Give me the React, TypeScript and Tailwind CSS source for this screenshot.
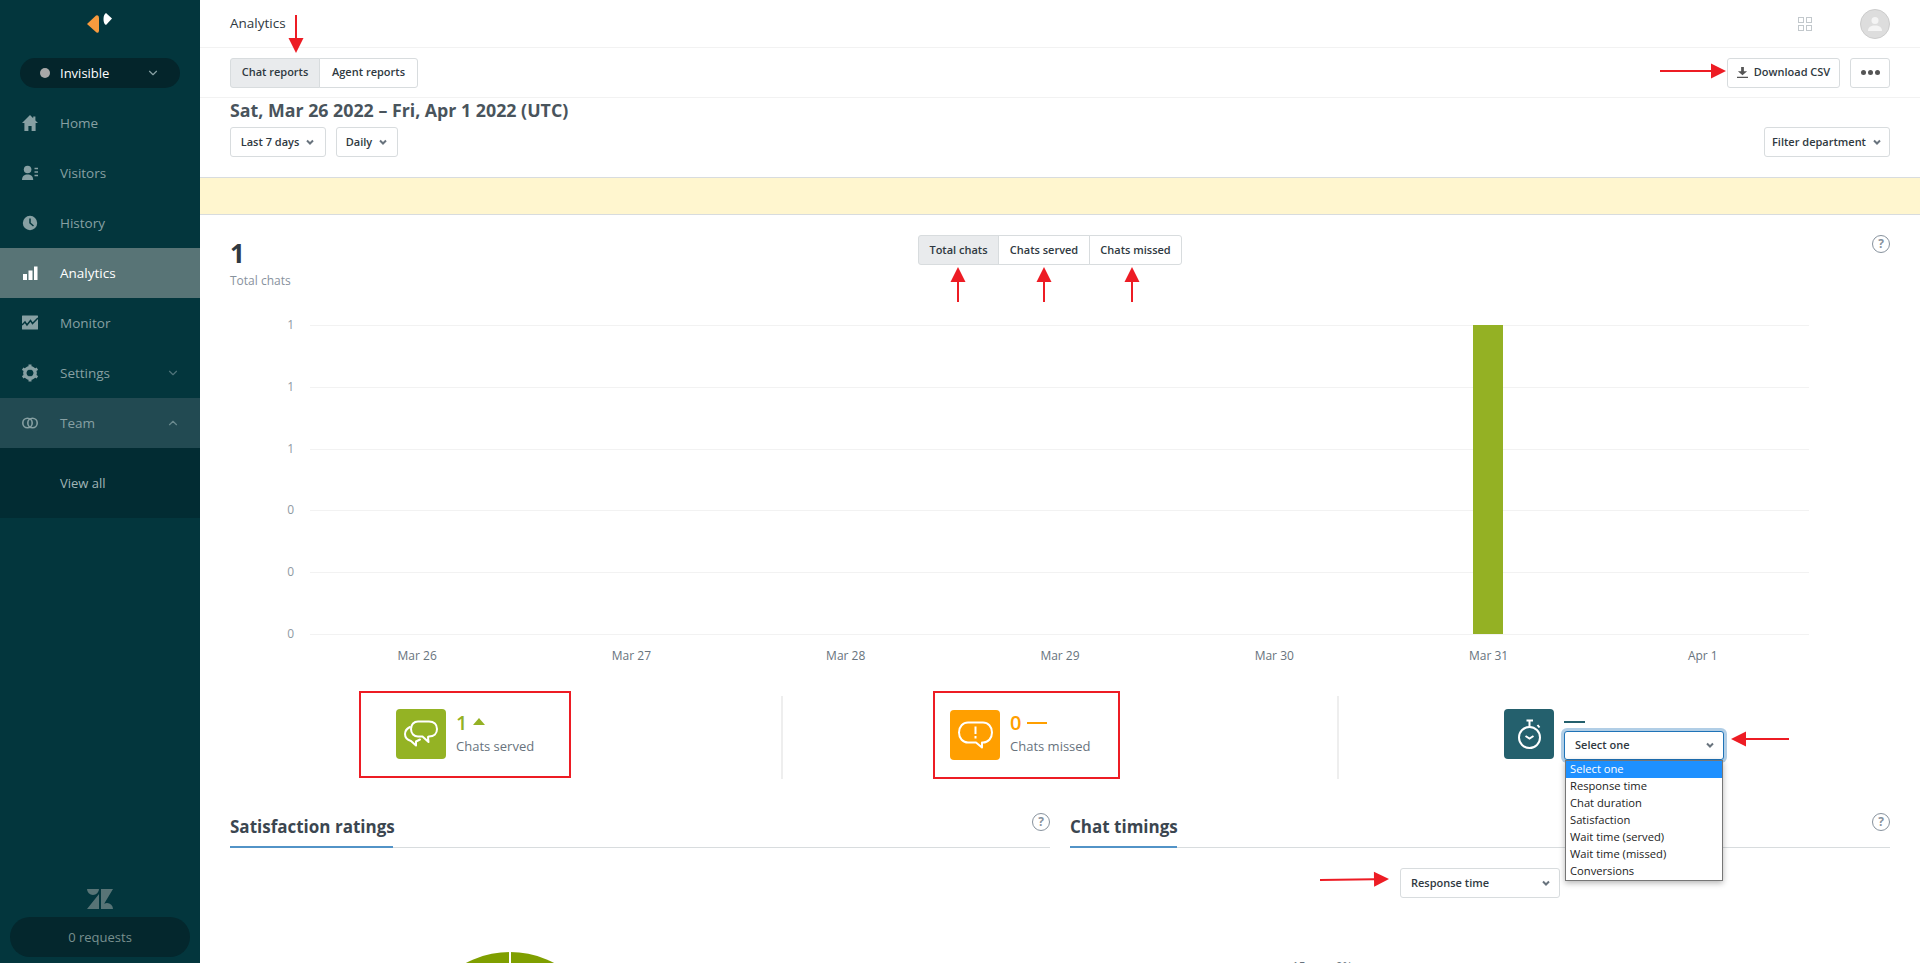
import { ChevronDown, ChevronUp } from 'lucide-react';

const chevron = 'M2 3.500l3 3 3-3';

function SmallChevron() {
  return (
    <svg viewBox="0 0 10 10" className="w-[10px] h-[10px] shrink-0 text-[#68737d]" fill="none" stroke="currentColor" strokeWidth="2">
      <path d={chevron} />
    </svg>
  );
}

function HelpIcon() {
  return (
    <div className="w-[18px] h-[18px] rounded-full border border-[#87929d] text-[#87929d] flex items-center justify-center text-[12px] font-bold leading-none">
      ?
    </div>
  );
}

function Btn({ children, className = '' }: { children: React.ReactNode; className?: string }) {
  return (
    <div className={`h-[30px] flex items-center justify-center gap-[6px] bg-white border border-[#d8dcde] rounded-[3px] text-[11px] font-semibold text-[#2f3941] whitespace-nowrap ${className}`}>
      {children}
    </div>
  );
}

// red annotation arrows that were painted on top of the screenshot
function Arrow({ x1, y1, x2, y2 }: { x1: number; y1: number; x2: number; y2: number }) {
  const a = Math.atan2(y2 - y1, x2 - x1);
  const bx = x2 - Math.cos(a) * 15;
  const by = y2 - Math.sin(a) * 15;
  const nx = -Math.sin(a) * 7.5;
  const ny = Math.cos(a) * 7.5;
  return (
    <>
      <line x1={x1} y1={y1} x2={bx} y2={by} stroke="#ed1c24" strokeWidth="2" />
      <polygon points={`${x2},${y2} ${bx + nx},${by + ny} ${bx - nx},${by - ny}`} fill="#ed1c24" />
    </>
  );
}

function Annotations() {
  return (
    <svg className="absolute inset-0 w-[1920px] h-[963px] pointer-events-none" viewBox="0 0 1920 963">
      <Arrow x1={296} y1={15} x2={296} y2={53} />
      <Arrow x1={1660} y1={71} x2={1726} y2={71} />
      <Arrow x1={958} y1={302} x2={958} y2={267} />
      <Arrow x1={1044} y1={302} x2={1044} y2={267} />
      <Arrow x1={1132} y1={302} x2={1132} y2={267} />
      <Arrow x1={1789} y1={739} x2={1731} y2={739} />
      <Arrow x1={1320} y1={880} x2={1389} y2={879} />
    </svg>
  );
}

const navIcons: Record<string, React.ReactNode> = {
  Home: <path d="M8 1 0 9h2.400v8h4v-5h3.200v5h4V9H16l-2.600-2.600V2.500h-2.200v1.700z" fill="currentColor" />,
  Visitors: (
    <>
      <circle cx="5.600" cy="5.500" r="3.800" fill="currentColor" />
      <path d="M0 16c0-3.600 2.400-5.400 5.600-5.400s5.600 1.800 5.600 5.400z" fill="currentColor" />
      <path d="M12.500 4.500H16M12.500 8H16M12.500 11.500H16" stroke="currentColor" strokeWidth="1.300" />
    </>
  ),
  History: (
    <>
      <circle cx="8" cy="9" r="7.200" fill="currentColor" />
      <path d="M8 4.500V9l3.500 3" stroke="#03363d" strokeWidth="1.500" fill="none" />
    </>
  ),
  Analytics: (
    <>
      <rect x="1" y="10" width="4" height="6" fill="currentColor" />
      <rect x="6.500" y="6.500" width="4" height="9.500" fill="currentColor" />
      <rect x="12" y="2.500" width="3.500" height="13.500" fill="currentColor" />
    </>
  ),
  Monitor: (
    <>
      <rect x="0" y="1.500" width="16" height="14" rx="0.500" fill="currentColor" />
      <path d="M0 11l3-3 2 3 3.500-4.500 2 3 5.500-5.500" stroke="#03363d" strokeWidth="1.500" fill="none" />
    </>
  ),
  Settings: (
    <>
      <circle cx="8" cy="9" r="5.200" fill="none" stroke="currentColor" strokeWidth="3.400" />
      <path d="M8 0.500V17.500M0.600 4.700 15.400 13.300M0.600 13.300 15.400 4.700" stroke="currentColor" strokeWidth="3" />
      <circle cx="8" cy="9" r="3.300" fill="#03363d" />
    </>
  ),
  Team: (
    <>
      <circle cx="5.500" cy="9" r="4.700" fill="none" stroke="currentColor" strokeWidth="1.600" />
      <circle cx="10.500" cy="9" r="4.700" fill="none" stroke="currentColor" strokeWidth="1.600" />
    </>
  ),
};

function NavItem({ label, active, open, chevron }: { label: string; active?: boolean; open?: boolean; chevron?: 'up' | 'down' }) {
  return (
    <div className={`h-[50px] flex items-center pl-[22px] pr-[20px] ${active ? 'bg-[#587476] text-white' : open ? 'bg-[#224a52] text-[#87a0a3]' : 'text-[#87a0a3]'}`}>
      <svg viewBox="0 0 16 18" className={`w-[16px] h-[18px] shrink-0 ${active ? 'text-white' : 'text-[#87a0a3]'}`}>
        {navIcons[label]}
      </svg>
      <span className={`ml-[22px] pt-[1px] text-[13.500px] leading-none ${active ? 'text-white' : ''}`}>{label}</span>
      {chevron === 'down' && <ChevronDown className="ml-auto w-[14px] h-[14px] text-[#4f7379]" />}
      {chevron === 'up' && <ChevronUp className="ml-auto w-[14px] h-[14px] text-[#6b8a8e]" />}
    </div>
  );
}

function Sidebar() {
  return (
    <aside className="w-[200px] h-full shrink-0 bg-[#03363d] flex flex-col">
      <div className="h-[58px] flex justify-center pt-[12px]">
        <svg viewBox="88 12 26 22" className="w-[26px] h-[22px]">
          <path d="M88 24 97 15.500Q100 14.500 100 18L100 30.500Q100 33.500 97.500 32.500z" fill="#f79a3e" />
          <path d="M107 13 113 18.500 107 25Q104.500 24 104.500 19Q104.500 14.500 107 13z" fill="#fff" />
        </svg>
      </div>
      <div className="mx-[20px] h-[30px] rounded-full bg-[#04252b] flex items-center pl-[20px] pr-[20px] text-[13px] text-white">
        <span className="w-[10px] h-[10px] rounded-full bg-[#a8a8a8]" />
        <span className="ml-[10px] pt-[1px]">Invisible</span>
        <ChevronDown className="ml-auto w-[14px] h-[14px] text-[#87a0a3]" />
      </div>
      <nav className="mt-[10px]">
        <NavItem label="Home" />
        <NavItem label="Visitors" />
        <NavItem label="History" />
        <NavItem label="Analytics" active />
        <NavItem label="Monitor" />
        <NavItem label="Settings" chevron="down" />
        <NavItem label="Team" open chevron="up" />
      </nav>
      <div className="h-[70px] bg-[#022c33] flex items-center pl-[60px] pt-[2px] text-[13px] text-[#a0b5b7]">View all</div>
      <div className="mt-auto flex flex-col items-center pb-[6px]">
        <svg viewBox="0 0 26 20" className="w-[26px] h-[20px] text-[#587476]">
          <path d="M0 0h12a6 6 0 0 1-12 0zM14 0h12L14 20V0zM12 20H0L12 5zM14 20a6 6 0 0 1 12 0z" fill="currentColor" />
        </svg>
        <div className="mt-[8px] w-[180px] h-[40px] rounded-full bg-[#04272d] flex items-center justify-center pt-[1px] text-[13px] text-[#78908f]">0 requests</div>
      </div>
    </aside>
  );
}

function Chart() {
  const rows = ['1', '1', '1', '0', '0', '0'];
  const days = ['Mar 26', 'Mar 27', 'Mar 28', 'Mar 29', 'Mar 30', 'Mar 31', 'Apr 1'];
  return (
    <div className="mt-[60px] ml-[30px] shrink-0">
      <div className="relative">
        {rows.map((r, i) => (
          <div key={i} className={`flex items-start ${i === rows.length - 1 ? 'h-[1px]' : 'h-[61.8px]'}`}>
            <span className="w-[64px] text-right text-[12px] leading-none -mt-[6px] text-[#8f9aa3]">{r}</span>
            <div className="ml-[16px] w-[1499px] h-[1px] bg-[#f2f2f2]" />
          </div>
        ))}
        <div className="absolute left-[1243px] top-0 w-[30px] h-[309px] bg-[#94b124]" />
      </div>
      <div className="ml-[80px] w-[1500px] flex mt-[13px]">
        {days.map((d) => (
          <div key={d} className="flex-1 text-center text-[12px] leading-[16px] text-[#68737d]">{d}</div>
        ))}
      </div>
    </div>
  );
}

function ServedIcon() {
  return (
    <svg viewBox="0 0 50 50" className="w-[50px] h-[50px]" fill="none" stroke="#fff" strokeWidth="2" strokeLinejoin="round" strokeLinecap="round">
      <path d="M22 12.500h11c5 0 8 3 8 7.500s-3 7.500-8 7.500l-1 .500.500 5-6-5.500h-4.500c-4 0-7-3-7-7.500s3-7.500 7-7.500z" />
      <path d="M14 18c-3 1.500-5 4-5 7 0 3.500 2.500 6 6 7l5 4.500v-4l4-2" />
    </svg>
  );
}

function MissedIcon() {
  return (
    <svg viewBox="0 0 50 50" className="w-[50px] h-[50px]" fill="none" stroke="#fff" strokeWidth="2" strokeLinejoin="round">
      <path d="M18 12.500h15c5 0 9 4 9 10s-4 10-9 10h-1v5l-6-5h-8c-5 0-9-4-9-10s4-10 9-10z" />
      <path d="M25.500 16.500v7.500M25.500 26v2.500" />
    </svg>
  );
}

function TimerIcon() {
  return (
    <svg viewBox="0 0 50 50" className="w-[50px] h-[50px]" fill="none" stroke="#fff" strokeWidth="2">
      <circle cx="25.500" cy="28.500" r="10.500" />
      <path d="M22.500 11.500h6.500M25.500 11.500V18M33.500 16l2 2.500" />
      <path d="M21.500 27l4 2.500 4-2.500" />
    </svg>
  );
}

function Stats() {
  return (
    <div className="mt-[27px] ml-[30px] mr-[30px] flex h-[87px] shrink-0">
      <div className="w-[553px] shrink-0 border-r-2 border-[#eeeeee] my-[5px] -mb-[1px] relative">
        <div className="absolute left-[129px] -top-[5px] w-[212px] h-[87px] border-2 border-[#ed1c24] flex items-center pl-[35px]">
          <div className="w-[50px] h-[50px] rounded-[4px] bg-[#94b324]"><ServedIcon /></div>
          <div className="ml-[10px] -mt-[3px]">
            <div className="flex items-center gap-[6px] text-[20px] leading-[24px] font-semibold text-[#94b124]">
              1
              <span className="w-0 h-0 border-l-[6px] border-r-[6px] border-b-[7px] border-l-transparent border-r-transparent border-b-[#94b124] mb-[2px]" />
            </div>
            <div className="mt-[2px] text-[13px] leading-[18px] text-[#68737d]">Chats served</div>
          </div>
        </div>
      </div>
      <div className="w-[556px] shrink-0 border-r-2 border-[#eeeeee] my-[5px] -mb-[1px] relative">
        <div className="absolute left-[150px] -top-[5px] w-[187px] h-[88px] border-2 border-[#ed1c24] flex items-center pl-[15px]">
          <div className="w-[50px] h-[50px] rounded-[4px] bg-[#ff9f00]"><MissedIcon /></div>
          <div className="ml-[10px] -mt-[3px]">
            <div className="flex items-center gap-[6px] text-[20px] leading-[24px] font-semibold text-[#ff9f00]">
              0
              <span className="w-[20px] h-[2px] bg-[#ff9f00]" />
            </div>
            <div className="mt-[2px] text-[13px] leading-[18px] text-[#68737d]">Chats missed</div>
          </div>
        </div>
      </div>
      <div className="relative flex-1 z-10">
        <div className="absolute left-[165px] top-[18px] w-[50px] h-[50px] rounded-[4px] bg-[#24606d]"><TimerIcon /></div>
        <div className="absolute left-[225px] top-[30px] w-[21px] h-[2px] bg-[#24606d]" />
        <div className="absolute left-[225px] top-[40px] w-[160px]">
          <div className="h-[29px] rounded-[3px] bg-white border border-[#1f73b7] shadow-[0_0_0_3px_rgba(31,115,183,0.35)] flex items-center justify-between pl-[10px] pr-[8px] text-[11px] font-semibold text-[#2f3941]">
            Select one
            <SmallChevron />
          </div>
          <div className="mx-[1px] bg-white border border-[#767676] shadow-[0_2px_6px_rgba(0,0,0,0.3)] text-[11.200px] leading-[15px] text-[#222]">
            <div className="h-[17px] bg-[#1e90ff] text-white pl-[4px]">Select one</div>
            {['Response time', 'Chat duration', 'Satisfaction', 'Wait time (served)', 'Wait time (missed)', 'Conversions'].map((o) => (
              <div key={o} className="h-[17px] pl-[4px]">{o}</div>
            ))}
          </div>
        </div>
      </div>
    </div>
  );
}

function SectionHead({ title, underline }: { title: string; underline: string }) {
  return (
    <div className="relative h-[38px] border-b border-[#d8dcde]">
      <div className={`absolute left-0 bottom-[-1px] h-[38px] flex items-center border-b-2 border-[#5293c7] text-[17px] font-bold text-[#3b4650] ${underline}`}>
        <span className="whitespace-nowrap -mt-[3px]">{title}</span>
      </div>
      <div className="absolute right-0 top-[3px]"><HelpIcon /></div>
    </div>
  );
}

export default function App() {
  return (
    <div className="relative w-[1920px] h-[963px] overflow-hidden bg-white flex font-['Open_Sans',sans-serif]">
      <Sidebar />
      <main className="flex-1 min-w-0 flex flex-col">
        <header className="h-[48px] shrink-0 border-b border-[#f2f2f2] flex items-center pl-[30px] pr-[30px]">
          <span className="text-[13.500px] text-[#2f3941]">Analytics</span>
          <svg viewBox="0 0 14 14" className="ml-auto w-[14px] h-[14px]" fill="none" stroke="#c2c8cc">
            <rect x="0.500" y="0.500" width="5" height="5" />
            <rect x="8.500" y="0.500" width="5" height="5" />
            <rect x="0.500" y="8.500" width="5" height="5" />
            <rect x="8.500" y="8.500" width="5" height="5" />
          </svg>
          <div className="ml-[48px] w-[30px] h-[30px] rounded-full bg-[#dddddd] border border-[#cccccc] overflow-hidden flex items-center justify-center">
            <svg viewBox="0 0 16 16" className="w-[16px] h-[16px]" fill="#f4f4f4">
              <circle cx="8" cy="4.500" r="3.500" />
              <path d="M1 15c0-4 3-5.500 7-5.500s7 1.500 7 5.500z" />
            </svg>
          </div>
        </header>

        <div className="h-[50px] shrink-0 border-b border-[#f2f2f2] flex items-center pl-[30px] pr-[30px]">
          <div className="flex">
            <Btn className="w-[90px] !bg-[#e9ebed] rounded-r-none">Chat reports</Btn>
            <Btn className="w-[99px] -ml-px rounded-l-none">Agent reports</Btn>
          </div>
          <Btn className="ml-auto w-[113px]">
            <svg viewBox="0 0 12 12" className="w-[11px] h-[11px]" fill="#555">
              <path d="M4.500 0h3v4.500H11L6 9 1 4.500h3.500zM0 10.500h12V12H0z" />
            </svg>
            Download CSV
          </Btn>
          <Btn className="ml-[10px] w-[40px] !gap-[2px]">
            <span className="w-[5px] h-[5px] rounded-full bg-[#555]" />
            <span className="w-[5px] h-[5px] rounded-full bg-[#555]" />
            <span className="w-[5px] h-[5px] rounded-full bg-[#555]" />
          </Btn>
        </div>

        <div className="h-[79px] shrink-0 pl-[30px] pr-[30px]">
          <h1 className="text-[17.800px] leading-[24px] h-[29px] font-bold text-[#49545c]">Sat, Mar 26 2022 – Fri, Apr 1 2022 (UTC)</h1>
          <div className="flex gap-[10px]">
            <Btn className="w-[96px]">Last 7 days <SmallChevron /></Btn>
            <Btn className="w-[62px]">Daily <SmallChevron /></Btn>
            <Btn className="ml-auto w-[126px]">Filter department <SmallChevron /></Btn>
          </div>
        </div>

        <div className="h-[38px] shrink-0 bg-[#fff6cf] border-y border-[#d8dcde]" />

        <div className="mt-[20px] h-[30px] ml-[30px] mr-[30px] flex items-start shrink-0">
          <div className="w-[688px] shrink-0">
            <div className="text-[26px] leading-[36px] font-bold text-[#2f3941]">1</div>
            <div className="text-[12px] leading-[18px] mt-[1px] text-[#87929d]">Total chats</div>
          </div>
          <div className="flex">
            <Btn className="w-[81px] !bg-[#e9ebed] rounded-r-none">Total chats</Btn>
            <Btn className="w-[92px] -ml-px rounded-none">Chats served</Btn>
            <Btn className="w-[93px] -ml-px rounded-l-none">Chats missed</Btn>
          </div>
          <div className="ml-auto"><HelpIcon /></div>
        </div>

        <Chart />
        <Stats />

        <div className="mt-[32px] ml-[30px] mr-[30px] flex gap-[20px] shrink-0">
          <div className="w-[820px] shrink-0">
            <SectionHead title="Satisfaction ratings" underline="w-[163px]" />
            <div className="h-[116px] relative overflow-hidden">
              <div className="absolute left-[186px] top-[104px] w-[188px] h-[188px] rounded-full bg-[#7f9f00]" />
              <div className="absolute left-[279px] top-[100px] w-[2px] h-[20px] bg-white" />
            </div>
          </div>
          <div className="w-[820px] shrink-0">
            <SectionHead title="Chat timings" underline="w-[107px]" />
            <Btn className="mt-[20px] ml-[330px] w-[160px] !justify-between pl-[10px] pr-[8px]">Response time <SmallChevron /></Btn>
            <div className="mt-[63px] ml-[222px] flex gap-[30px] text-[12px] leading-none text-[#68737d]">
              <span>15</span>
              <span>0%</span>
            </div>
          </div>
        </div>
      </main>
      <Annotations />
    </div>
  );
}
